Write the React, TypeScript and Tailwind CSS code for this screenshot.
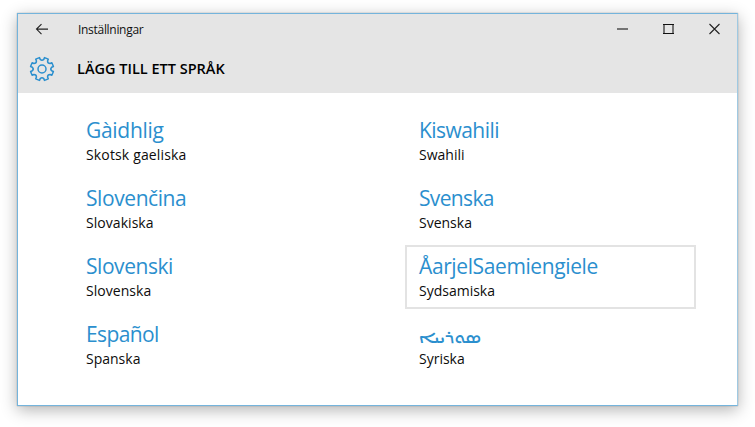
type Language = { native: string; name: string; nativeStyle: string; nameSpacing: string; selected?: boolean };

const languages: Language[] = [
  { native: "Gàidhlig", name: "Skotsk gaeliska", nativeStyle: "text-[21px] leading-[25px] tracking-[-0.3px]", nameSpacing: "tracking-[0.15px]" },
  { native: "Kiswahili", name: "Swahili", nativeStyle: "text-[21px] leading-[25px] tracking-[-0.55px]", nameSpacing: "tracking-normal" },
  { native: "Slovenčina", name: "Slovakiska", nativeStyle: "text-[21px] leading-[25px] tracking-[-0.42px]", nameSpacing: "tracking-[0.05px]" },
  { native: "Svenska", name: "Svenska", nativeStyle: "text-[21px] leading-[25px] tracking-[-0.65px]", nameSpacing: "tracking-normal" },
  { native: "Slovenski", name: "Slovenska", nativeStyle: "text-[21px] leading-[25px] tracking-[-0.45px]", nameSpacing: "tracking-[0.05px]" },
  { native: "ÅarjelSaemiengiele", name: "Sydsamiska", nativeStyle: "text-[21px] leading-[25px] tracking-[-0.39px]", nameSpacing: "tracking-normal", selected: true },
  { native: "Español", name: "Spanska", nativeStyle: "text-[21px] leading-[25px] tracking-[-0.6px]", nameSpacing: "tracking-normal" },
  { native: "ܣܘܪܝܝܐ", name: "Syriska", nativeStyle: "text-[17px] font-semibold leading-[29px] font-['Open_Sans','Noto_Sans_Syriac_Estrangela','Noto_Sans_Syriac','Estrangelo_Edessa',sans-serif]", nameSpacing: "tracking-normal" },
];

function gearPath() {
  const at = (deg: number, r: number) => {
    const a = (deg * Math.PI) / 180;
    return `${(13 + r * Math.cos(a)).toFixed(2)} ${(13 + r * Math.sin(a)).toFixed(2)}`;
  };
  let d = "";
  for (let i = 0; i < 8; i++) {
    const c = 22.5 + i * 45;
    d += `${i === 0 ? "M" : "L"}${at(c - 10, 11.7)} L${at(c + 10, 11.7)} L${at(c + 12, 9.8)} Q${at(c + 22.5, 7.9)} ${at(c + 33, 9.8)} `;
  }
  return d + "Z";
}

function Gear() {
  return (
    <svg className="h-[26px] w-[26px]" viewBox="0 0 26 26" fill="none" stroke="#2b8fce" strokeWidth="1.5" strokeLinejoin="round">
      <path d={gearPath()} />
      <circle cx="13" cy="13" r="4" />
    </svg>
  );
}

function LanguageItem({ item }: { item: Language }) {
  return (
    <div className={`h-16 w-[291px] border-2 px-3 pt-[7px] ${item.selected ? "border-[#e3e3e3]" : "border-transparent"}`}>
      <div className={`h-[27px] whitespace-nowrap text-[#2b8fce] ${item.nativeStyle}`}>{item.native}</div>
      <div className={`h-5 whitespace-nowrap text-[14px] leading-5 text-[#0c0c0c] ${item.nameSpacing}`}>{item.name}</div>
    </div>
  );
}

export default function App() {
  return (
    <div className="h-[427px] w-[755px] overflow-hidden bg-white pl-[17px] pt-[13px] font-['Open_Sans','Noto_Sans',sans-serif]">
      <div className="h-[393px] w-[721px] border border-[#74b4dc] border-r-[#9fc9e2] bg-white shadow-[0_0_1px_0px_rgba(0,0,0,0.35),0_4px_15px_rgba(0,0,0,0.3)]">
        <header className="h-[79px] bg-[#e5e5e5]">
          <div className="flex h-8 items-center">
            <svg className="ml-[17px] h-4 w-4" viewBox="0 0 16 16" fill="none" stroke="#222" strokeWidth="1.1">
              <path d="M13 7.1H1.5M6.5 2.1L1.5 7.1L6.5 12.1" />
            </svg>
            <span className="ml-[27px] text-[12px] tracking-[-0.3px] text-[#111]">Inställningar</span>
            <div className="ml-auto flex items-center gap-[30px] pr-[15px]">
              <svg className="h-4 w-4" viewBox="0 0 16 16" stroke="#747474" strokeWidth="2">
                <path d="M3 7H14" />
              </svg>
              <svg className="h-4 w-4" viewBox="0 0 16 16" fill="none">
                <path d="M4 2V12M13 2V12" stroke="#747474" strokeWidth="2" />
                <path d="M3 2.5H14M3 11.5H14" stroke="#111" />
              </svg>
              <svg className="h-4 w-4" viewBox="0 0 16 16" stroke="#222" strokeWidth="1.1">
                <path d="M3.5 2L13.5 12M13.5 2L3.5 12" />
              </svg>
            </div>
          </div>
          <div className="flex h-[47px] items-center pb-px pl-[11px]">
            <Gear />
            <h1 className="ml-[22px] whitespace-nowrap text-[14.5px] font-semibold text-black">LÄGG TILL ETT SPRÅK</h1>
          </div>
        </header>
        <main className="grid grid-cols-[333px_291px] gap-y-1 pl-[54px] pt-4">
          {languages.map((item) => (
            <LanguageItem key={item.name} item={item} />
          ))}
        </main>
      </div>
    </div>
  );
}
